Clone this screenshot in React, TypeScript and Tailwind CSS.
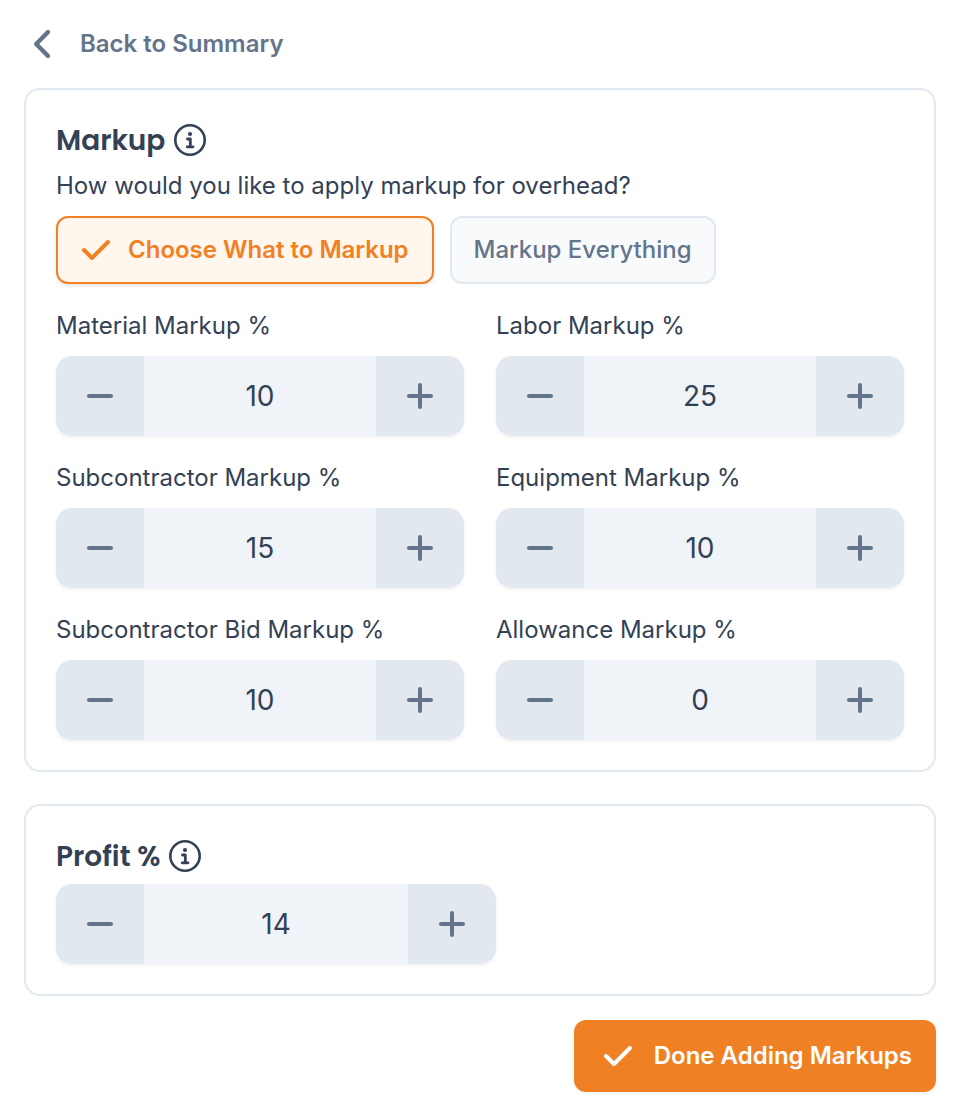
import { useId, useState } from "react";

function ChevronLeftIcon() {
  return (
    <svg viewBox="0 0 36 36" className="size-9 shrink-0" fill="none" stroke="currentColor" strokeWidth="4.4" strokeLinecap="round" strokeLinejoin="round" aria-hidden="true">
      <path d="M24 6 12.2 18 24 30" />
    </svg>
  );
}

function CheckIcon() {
  return (
    <svg viewBox="0 0 32 32" className="size-8 shrink-0" fill="none" stroke="currentColor" strokeWidth="4" strokeLinecap="round" strokeLinejoin="round" aria-hidden="true">
      <path d="M4 16l8 8L28 8" />
    </svg>
  );
}

function InfoIcon() {
  return (
    <svg viewBox="0 0 32 32" className="size-8" fill="none" stroke="currentColor" aria-hidden="true">
      <circle cx="16" cy="16" r="14.7" strokeWidth="2.6" />
      <circle cx="16" cy="10" r="2.1" fill="currentColor" stroke="none" />
      <path d="M13.5 15H16.3V22.8M13.2 22.8H19" strokeWidth="2.8" strokeLinecap="round" strokeLinejoin="round" />
    </svg>
  );
}

function StepIcon({ plus = false }: { plus?: boolean }) {
  return (
    <svg viewBox="0 0 32 32" className="size-8" fill="none" stroke="currentColor" strokeWidth="4" strokeLinecap="round" aria-hidden="true">
      <path d={plus ? "M5 16H27M16 5V27" : "M5 16H27"} />
    </svg>
  );
}

interface StepperProps {
  id: string;
  name: string;
  initial: number;
}

function Stepper({ id, name, initial }: StepperProps) {
  const [value, setValue] = useState(String(initial));
  const step = (amount: number) => setValue((v) => String(Math.max(0, (Number(v) || 0) + amount)));
  return (
    <div className="flex h-20 overflow-hidden rounded-2xl bg-[#f0f4f9] shadow-[0_2px_4px_rgba(0,0,0,0.05)]">
      <button type="button" aria-label={`Decrease ${name}`} onClick={() => step(-1)} className="flex w-22 shrink-0 items-center justify-center bg-[#e1e8f0] text-[#64748b]">
        <StepIcon />
      </button>
      <input
        id={id}
        inputMode="numeric"
        value={value}
        onChange={(e) => setValue(e.target.value)}
        className="w-full min-w-0 flex-1 bg-[#f0f4f9] text-center text-[28px] text-[#334155] outline-none"
      />
      <button type="button" aria-label={`Increase ${name}`} onClick={() => step(1)} className="flex w-22 shrink-0 items-center justify-center bg-[#e1e8f0] text-[#64748b]">
        <StepIcon plus />
      </button>
    </div>
  );
}

function Field({ name, initial }: { name: string; initial: number }) {
  const id = useId();
  return (
    <div className="flex flex-col gap-3">
      <label htmlFor={id} className="text-2xl leading-9">{name}</label>
      <Stepper id={id} name={name} initial={initial} />
    </div>
  );
}

const fields = [
  { name: "Material Markup %", initial: 10 },
  { name: "Labor Markup %", initial: 25 },
  { name: "Subcontractor Markup %", initial: 15 },
  { name: "Equipment Markup %", initial: 10 },
  { name: "Subcontractor Bid Markup %", initial: 10 },
  { name: "Allowance Markup %", initial: 0 },
];

const modes = ["Choose What to Markup", "Markup Everything"];

export default function App() {
  const [mode, setMode] = useState(modes[0]);
  return (
    <main className="flex flex-col p-6 font-['Inter',sans-serif] text-[#334155]">
      <a href="#summary" className="flex h-10 items-center gap-5 self-start text-2xl font-semibold text-[#64748b]">
        <ChevronLeftIcon />
        Back to Summary
      </a>

      <section className="mt-6 rounded-2xl border-2 border-[#e2e8f0] p-[30px]">
        <div className="flex h-10 items-center gap-[9px]">
          <h2 className="pt-0.5 font-['Poppins','Inter',sans-serif] text-[28px] font-semibold">Markup</h2>
          <button type="button" aria-label="About markup"><InfoIcon /></button>
        </div>
        <p className="mt-2 text-2xl leading-9">How would you like to apply markup for overhead?</p>
        <div className="mt-3 flex flex-wrap gap-4">
          {modes.map((m) => {
            const active = m === mode;
            return (
              <button
                key={m}
                type="button"
                aria-pressed={active}
                onClick={() => setMode(m)}
                className={
                  active
                    ? "flex h-17 items-center gap-4 rounded-xl border-2 border-[#f08024] bg-[#fff6ed] pr-[23px] pl-[22px] text-2xl font-semibold text-[#f08024] shadow-[0_2px_4px_rgba(0,0,0,0.1)]"
                    : "flex h-17 items-center gap-4 rounded-xl border-2 border-[#e2e8f0] bg-[#f8fafc] px-[22px] text-2xl font-medium text-[#64748b]"
                }
              >
                {active && <CheckIcon />}
                {m}
              </button>
            );
          })}
        </div>
        <div className="mt-6 grid grid-cols-2 gap-x-8 gap-y-6">
          {fields.map((f) => (
            <Field key={f.name} {...f} />
          ))}
        </div>
      </section>

      <section className="mt-8 rounded-2xl border-2 border-[#e2e8f0] p-[30px]">
        <div className="flex h-10 items-center gap-[9px]">
          <h2 className="pt-0.5 font-['Poppins','Inter',sans-serif] text-[28px] font-semibold">
            <label htmlFor="profit">Profit %</label>
          </h2>
          <button type="button" aria-label="About profit"><InfoIcon /></button>
        </div>
        <div className="mt-2 max-w-110">
          <Stepper id="profit" name="Profit %" initial={14} />
        </div>
      </section>

      <button type="button" className="mt-6 flex h-18 items-center gap-5 self-end rounded-xl bg-[#f08024] pr-6 pl-7 text-2xl font-semibold text-white shadow-[0_2px_4px_rgba(0,0,0,0.05)]">
        <CheckIcon />
        Done Adding Markups
      </button>
    </main>
  );
}
